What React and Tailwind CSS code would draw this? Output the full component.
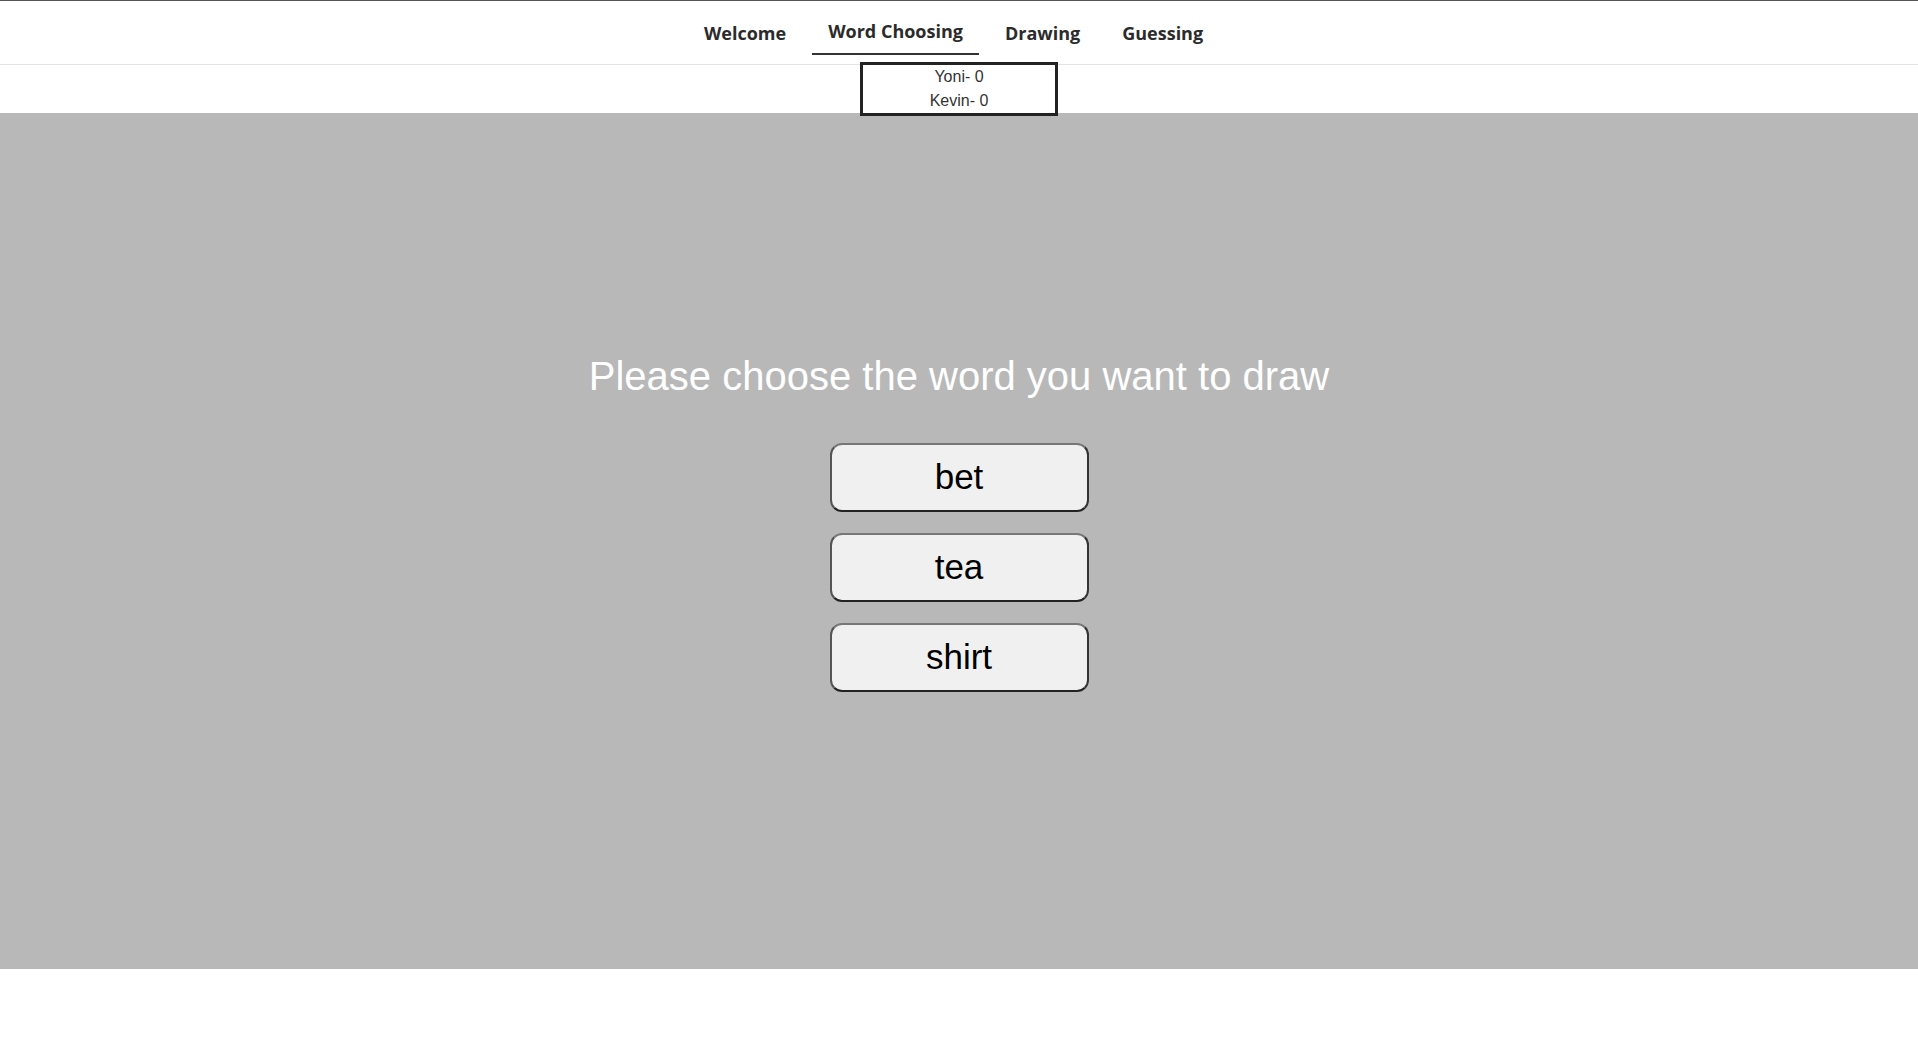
const tabs = ['Welcome', 'Word Choosing', 'Drawing', 'Guessing']
const active = 'Word Choosing'
const words = ['bet', 'tea', 'shirt']
const players = [{ name: 'Yoni', score: 0 }, { name: 'Kevin', score: 0 }]

function NavBar() {
  return (
    <nav className="flex justify-center items-start gap-[10px] h-[65px] border-t border-t-[#555] border-b border-b-[#e3e3e3] pr-[11px]">
      {tabs.map((t) => (
        <div key={t}
          className={`px-4 text-[18px] leading-[24px] font-bold text-[#2b2b2b] font-['Open_Sans',sans-serif] ${t === active ? 'pt-[18px] pb-[10px] border-b-2 border-b-[#333]' : 'pt-[20px]'}`}>
          {t}
        </div>
      ))}
    </nav>
  )
}

function ScoreBoard() {
  return (
    <div className="flex justify-center">
      <div className="relative z-10 mt-[-3px] w-[198px] h-[54px] border-[3px] border-[#222] bg-white flex flex-col items-center text-[16px] leading-[24px] text-[#333] font-['Liberation_Sans',Arial,sans-serif]">
        {players.map((p) => (
          <div key={p.name}>{p.name}- {p.score}</div>
        ))}
      </div>
    </div>
  )
}

export default function App() {
  return (
    <div className="min-h-[1057px] bg-white">
      <NavBar />
      <ScoreBoard />
      <main className="mt-[-3px] h-[856px] bg-[#b8b8b8] flex flex-col items-center pt-[240px] font-['Liberation_Sans',Arial,sans-serif]">
        <h1 className="text-[40px] leading-[46px] text-white">Please choose the word you want to draw</h1>
        <div className="mt-[44px] flex flex-col gap-[21px]">
          {words.map((w) => (
            <button key={w}
              className="w-[259px] h-[69px] rounded-[12px] border-2 border-t-[#777] border-l-[#555] border-b-[#222] border-r-[#333] bg-[#f0f0f0] text-[35px] text-black">
              {w}
            </button>
          ))}
        </div>
      </main>
    </div>
  )
}
